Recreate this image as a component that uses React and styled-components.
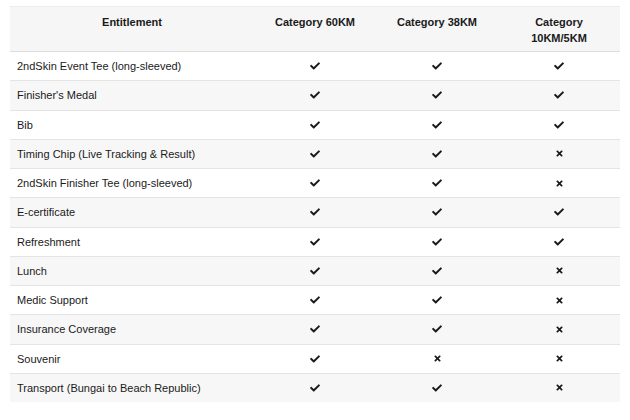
import React from "react";
import styled, { createGlobalStyle } from "styled-components";
import { FaCheck, FaTimes } from "react-icons/fa";

const rows = [
  ["2ndSkin Event Tee (long-sleeved)", true, true, true],
  ["Finisher's Medal", true, true, true],
  ["Bib", true, true, true],
  ["Timing Chip (Live Tracking & Result)", true, true, false],
  ["2ndSkin Finisher Tee (long-sleeved)", true, true, false],
  ["E-certificate", true, true, true],
  ["Refreshment", true, true, true],
  ["Lunch", true, true, false],
  ["Medic Support", true, true, false],
  ["Insurance Coverage", true, true, false],
  ["Souvenir", true, false, false],
  ["Transport (Bungai to Beach Republic)", true, true, false],
];

const App = () => {
  return (
    <>
      <GlobalStyle />
      <Page>
        <Table>
          <colgroup>
            <col style={{ width: 244 }} />
            <col style={{ width: 122 }} />
            <col style={{ width: 122 }} />
            <col style={{ width: 122 }} />
          </colgroup>
          <thead>
            <HeadRow>
              <Th>Entitlement</Th>
              <Th>Category 60KM</Th>
              <Th>Category 38KM</Th>
              <Th>
                Category
                <br />
                10KM/5KM
              </Th>
            </HeadRow>
          </thead>
          <tbody>
            {rows.map(([label, ...marks], index) => (
              <Row key={label} $striped={index % 2 === 1}>
                <Td>{label}</Td>
                {marks.map((ok, i) => (
                  <MarkCell key={i}>
                    {ok ? <FaCheck size={10} /> : <FaTimes size={9} />}
                  </MarkCell>
                ))}
              </Row>
            ))}
          </tbody>
        </Table>
      </Page>
    </>
  );
};

export default App;

const GlobalStyle = createGlobalStyle`
  body {
    margin: 0;
    background: #fff;
    font-family: "Liberation Sans", Arial, Helvetica, sans-serif;
    color: #1a1a1a;
  }
`;

const Page = styled.div`
  padding: 6px 10px 0 10px;
`;

const Table = styled.table`
  width: 610px;
  border-collapse: collapse;
  table-layout: fixed;
  font-size: 11px;
`;

const HeadRow = styled.tr`
  background: #f6f6f6;
  border-top: 1px solid #ececec;
  border-bottom: 1px solid #dcdcdc;
`;

const Th = styled.th`
  padding: 7px 8px 5px;
  line-height: 16px;
  font-weight: bold;
  text-align: center;
  vertical-align: top;
`;

const Row = styled.tr`
  background: ${(props) => (props.$striped ? "#f7f7f7" : "#fff")};
  border-bottom: 1px solid #e4e4e4;

  &:last-child {
    border-bottom: none;
  }
`;

const Td = styled.td`
  height: 28.25px;
  padding: 0 7px;
  line-height: 14px;
  vertical-align: middle;
`;

const MarkCell = styled(Td)`
  text-align: center;

  svg {
    display: inline-block;
    vertical-align: middle;
    margin-top: -2px;
  }
`;
